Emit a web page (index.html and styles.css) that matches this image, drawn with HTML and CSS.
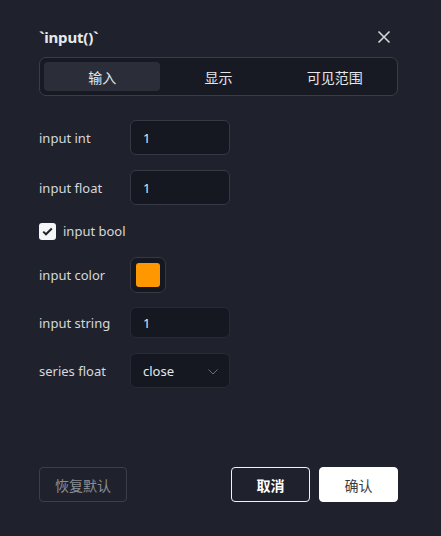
FILE: index.html
```html
<!DOCTYPE html>
<html lang="zh">
<head>
<meta charset="utf-8">
<link rel="stylesheet" href="styles.css">
</head>
<body>
<div class="dialog">
  <div class="header">
    <div class="title">`input()`</div>
    <svg class="close" width="14" height="14" viewBox="0 0 14 14"><path d="M1.5 1.5 L12.5 12.5 M12.5 1.5 L1.5 12.5" stroke="#d4d6db" stroke-width="1.6" fill="none"/></svg>
  </div>
  <div class="tabs">
    <div class="tab active">输入</div>
    <div class="tab">显示</div>
    <div class="tab">可见范围</div>
  </div>
  <div class="form">
    <div class="row r-int">
      <div class="label">input int</div>
      <div class="field">1</div>
    </div>
    <div class="row r-float">
      <div class="label">input float</div>
      <div class="field">1</div>
    </div>
    <div class="row r-bool">
      <span class="check"><svg width="11" height="9" viewBox="0 0 11 9"><path d="M1.2 4.6 L4 7.3 L9.8 1.5" stroke="#1f222d" stroke-width="2" fill="none"/></svg></span>
      <span class="label">input bool</span>
    </div>
    <div class="row r-color">
      <div class="label">input color</div>
      <div class="swatch"><span class="swatch-fill"></span></div>
    </div>
    <div class="row r-string">
      <div class="label">input string</div>
      <div class="field soft">1</div>
    </div>
    <div class="row r-select">
      <div class="label">series float</div>
      <div class="field soft select">close
        <svg class="chev" width="10" height="6" viewBox="0 0 10 6"><path d="M0.5 0.5 L5 5 L9.5 0.5" stroke="#6c6f78" stroke-width="1" fill="none"/></svg>
      </div>
    </div>
  </div>
  <div class="footer">
    <button class="btn reset">恢复默认</button>
    <div class="right">
      <button class="btn cancel">取消</button>
      <button class="btn ok">确认</button>
    </div>
  </div>
</div>
</body>
</html>
```
FILE: styles.css
```css
html, body {
  margin: 0;
  padding: 0;
  background: #1f222d;
  width: 441px;
  height: 536px;
  overflow: hidden;
}
body {
  font-family: "Noto Sans", "Noto Sans CJK SC", sans-serif;
  color: #d9dbe0;
}
.dialog {
  padding: 26px 43px 0 39px;
  display: flex;
  flex-direction: column;
  height: 536px;
  box-sizing: border-box;
}
.header {
  display: flex;
  justify-content: space-between;
  align-items: center;
  height: 22px;
}
.title {
  font-size: 15px;
  font-weight: 700;
  color: #e8e9ed;
  letter-spacing: -0.2px;
}
.close {
  margin-right: 7px;
}
.tabs {
  margin-top: 9px;
  display: grid;
  grid-template-columns: 1fr 1fr 1fr;
  padding: 4px;
  height: 39px;
  box-sizing: border-box;
  border: 1px solid #3a3d47;
  border-radius: 7px;
  background: #171a23;
}
.tab {
  display: flex;
  align-items: center;
  justify-content: center;
  font-family: "Noto Sans CJK SC", sans-serif;
  font-size: 14px;
  color: #e4e6ea;
  border-radius: 4px;
}
.tab.active {
  background: #2b2e39;
}
.form {
  margin-top: 24px;
  display: flex;
  flex-direction: column;
}
.row {
  display: flex;
  align-items: center;
}
.label {
  width: 91px;
  font-size: 13px;
  color: #d6d8dd;
}
.field {
  width: 100px;
  box-sizing: border-box;
  height: 35px;
  border: 1px solid #363943;
  border-radius: 6px;
  background: #151821;
  padding-left: 12px;
  display: flex;
  align-items: center;
  font-size: 13px;
  color: #e6e7ea;
}
.field.soft {
  border-color: #282b35;
}
.r-float { margin-top: 15px; }
.r-bool { margin-top: 14px; height: 24px; }
.r-color { margin-top: 14px; }
.r-string { margin-top: 14px; }
.r-string .field { height: 31px; }
.r-select { margin-top: 15px; }
.select {
  position: relative;
}
.chev {
  position: absolute;
  right: 11px;
  top: 15px;
}
.check {
  width: 17px;
  height: 17px;
  border-radius: 3px;
  background: #f4f5f7;
  display: flex;
  align-items: center;
  justify-content: center;
  margin-right: 7px;
}
.r-bool .label {
  width: auto;
}
.swatch {
  width: 36px;
  height: 36px;
  box-sizing: border-box;
  border: 1px solid #363943;
  border-radius: 7px;
  background: #151821;
  display: flex;
  align-items: center;
  justify-content: center;
}
.swatch-fill {
  width: 24px;
  height: 24px;
  border-radius: 3px;
  background: #ff9800;
}
.footer {
  margin-top: auto;
  margin-bottom: 34px;
  display: flex;
  justify-content: space-between;
}
.right {
  display: flex;
  gap: 9px;
}
.btn {
  height: 35px;
  border-radius: 4px;
  font-family: "Noto Sans CJK SC", sans-serif;
  font-size: 14px;
  box-sizing: border-box;
  padding: 0;
  cursor: pointer;
}
.reset {
  width: 88px;
  background: transparent;
  border: 1px solid #3c3f48;
  color: #8b8d94;
}
.cancel {
  width: 79px;
  background: transparent;
  border: 1px solid #f0f1f3;
  color: #ffffff;
  font-weight: 700;
}
.ok {
  width: 79px;
  background: #ffffff;
  border: 1px solid #ffffff;
  color: #3a3c42;
}
```
